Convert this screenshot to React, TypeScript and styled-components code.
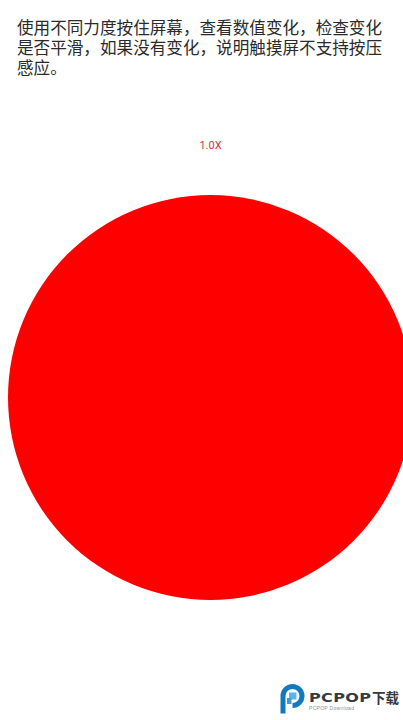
import React from "react";
import styled, { createGlobalStyle } from "styled-components";

const Global = createGlobalStyle`
  html, body { margin: 0; padding: 0; background: #fff; }
  body { width: 403px; height: 720px; overflow: hidden; }
`;

const Page = styled.main`
  position: relative;
  width: 403px;
  height: 720px;
  overflow: hidden;
  background: #fff;
  display: flex;
  flex-direction: column;
  font-family: "Roboto", "Noto Sans CJK SC", sans-serif;
`;

const Hint = styled.p`
  margin: 0;
  padding: 17px 18px 0 17px;
  font-family: "Noto Sans CJK SC", sans-serif;
  font-size: 16.6px;
  line-height: 20px;
  color: #2a2a2a;
  height: 62px;
`;

const Scale = styled.div`
  margin: 60px 0 0 8px;
  width: 405px;
  text-align: center;
  font-size: 11px;
  line-height: 14px;
  color: #d8343c;
`;

const Circle = styled.div`
  margin: 42px 0 0 8px;
  width: 405px;
  height: 405px;
  flex: none;
  border-radius: 50%;
  background: #fe0000;
`;

const Watermark = styled.div`
  position: absolute;
  left: 279px;
  top: 684px;
  display: flex;
  align-items: center;
  gap: 3px;
`;

const WmText = styled.div`
  display: flex;
  flex-direction: column;
  padding-top: 3px;
`;

const WmTitle = styled.div`
  display: flex;
  align-items: center;
  line-height: 15px;
  color: #333a42;
  white-space: nowrap;
`;

const WmLatin = styled.span`
  display: inline-block;
  width: 63px;
  font-family: "DejaVu Sans", sans-serif;
  font-weight: 700;
  font-size: 12.5px;
  letter-spacing: 0.3px;
  transform: scaleX(1.28);
  transform-origin: left center;
`;

const WmCjk = styled.span`
  font-family: "Noto Sans CJK SC", sans-serif;
  font-weight: 700;
  font-size: 13.5px;
`;

const WmSub = styled.div`
  font-family: "Liberation Sans", sans-serif;
  font-size: 5px;
  line-height: 7px;
  letter-spacing: 0.3px;
  color: #8a9096;
  white-space: nowrap;
`;

function Logo() {
  return (
    <svg width="27" height="30" viewBox="0 0 27 30">
      <path d="M4 29.5 V12 A9.5 9.5 0 1 1 13.5 21.5" fill="none" stroke="#1279bd" strokeWidth="5" />
      <rect x="10" y="8.5" width="7.5" height="7" fill="#5db4e6" />
      <rect x="8" y="14" width="4.5" height="6" fill="#3f9bd6" />
    </svg>
  );
}

const HINT =
  "\u4f7f\u7528\u4e0d\u540c\u529b\u5ea6\u6309\u4f4f\u5c4f\u5e55\uFF0C\u67e5\u770b\u6570\u503c\u53d8\u5316\uFF0C\u68c0\u67e5\u53d8\u5316\u662f\u5426\u5e73\u6ed1\uFF0C\u5982\u679c\u6ca1\u6709\u53d8\u5316\uFF0C\u8bf4\u660e\u89e6\u6478\u5c4f\u4e0d\u652f\u6301\u6309\u538b\u611f\u5e94\u3002";

export default function App() {
  return (
    <Page>
      <Global />
      <Hint>{HINT}</Hint>
      <Scale>1.0X</Scale>
      <Circle />
      <Watermark>
        <Logo />
        <WmText>
          <WmTitle>
            <WmLatin>PCPOP</WmLatin>
            <WmCjk>下载</WmCjk>
          </WmTitle>
          <WmSub>PCPOP Download</WmSub>
        </WmText>
      </Watermark>
    </Page>
  );
}
